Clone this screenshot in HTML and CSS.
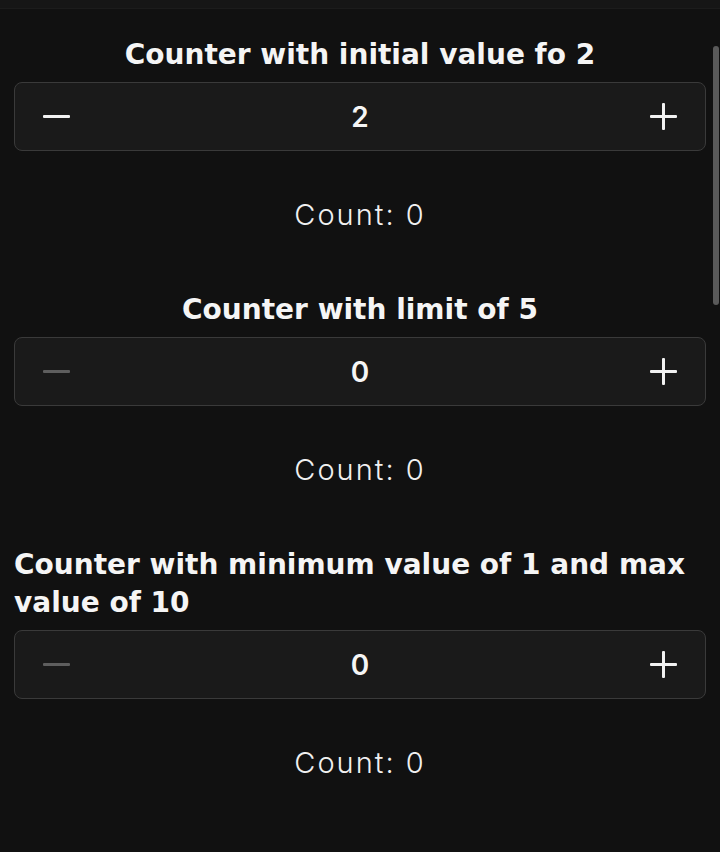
FILE: index.html
```html
<!DOCTYPE html>
<html>
<head>
<meta charset="utf-8">
<link rel="stylesheet" href="styles.css">
</head>
<body>
<div class="topbar"></div>
<main class="page">
  <section class="counter">
    <h2 class="title center">Counter with initial value fo 2</h2>
    <div class="stepper">
      <button class="btn minus"><span class="bar"></span></button>
      <span class="value">2</span>
      <button class="btn plus"><span class="bar"></span><span class="bar vert"></span></button>
    </div>
    <p class="count">Count: 0</p>
  </section>
  <section class="counter">
    <h2 class="title center">Counter with limit of 5</h2>
    <div class="stepper">
      <button class="btn minus disabled"><span class="bar"></span></button>
      <span class="value">0</span>
      <button class="btn plus"><span class="bar"></span><span class="bar vert"></span></button>
    </div>
    <p class="count">Count: 0</p>
  </section>
  <section class="counter">
    <h2 class="title">Counter with minimum value of 1 and max value of 10</h2>
    <div class="stepper">
      <button class="btn minus disabled"><span class="bar"></span></button>
      <span class="value">0</span>
      <button class="btn plus"><span class="bar"></span><span class="bar vert"></span></button>
    </div>
    <p class="count">Count: 0</p>
  </section>
</main>
<div class="scrollbar"></div>
</body>
</html>
```
FILE: styles.css
```css
html, body {
  margin: 0;
  padding: 0;
  background: #111111;
  height: 100%;
  overflow: hidden;
}
body {
  font-family: Inter, "Open Sans", "Liberation Sans", sans-serif;
  color: #f2f2f2;
  position: relative;
}
.topbar {
  height: 8px;
  background: #161616;
  border-bottom: 1px solid #1c1c1c;
}
.page {
  padding: 27px 14px 0 14px;
  display: flex;
  flex-direction: column;
  gap: 57px;
}
.counter {
  display: flex;
  flex-direction: column;
}
.title {
  margin: 0;
  font-family: "DejaVu Sans", Inter, sans-serif;
  font-size: 28px;
  font-weight: 600;
  line-height: 38px;
  color: #f5f5f5;
}
.title.center {
  text-align: center;
}
.stepper {
  margin-top: 8px;
  height: 67px;
  border: 1px solid #3a3a3a;
  border-radius: 8px;
  background: #1a1a1a;
  display: flex;
  align-items: center;
  justify-content: space-between;
  padding: 0 28px;
}
.btn {
  background: none;
  border: 0;
  padding: 0;
  width: 27px;
  height: 27px;
  position: relative;
  display: flex;
  align-items: center;
  justify-content: center;
}
.bar {
  position: absolute;
  left: 0;
  top: 12px;
  width: 27px;
  height: 3px;
  background: #f2f2f2;
  border-radius: 1px;
}
.bar.vert {
  left: 12px;
  top: 0;
  width: 3px;
  height: 27px;
}
.btn.minus.disabled .bar {
  background: #5e5e5e;
}
.value {
  font-size: 28px;
  font-weight: 600;
  color: #f5f5f5;
}
.count {
  margin: 45px 0 0 0;
  text-align: center;
  font-size: 29px;
  line-height: 38px;
  font-weight: 300;
  letter-spacing: 2px;
  color: #f0f0f0;
}
.scrollbar {
  position: absolute;
  right: 1px;
  top: 46px;
  width: 6px;
  height: 259px;
  border-radius: 3px;
  background: #5a5a5a;
}
```
